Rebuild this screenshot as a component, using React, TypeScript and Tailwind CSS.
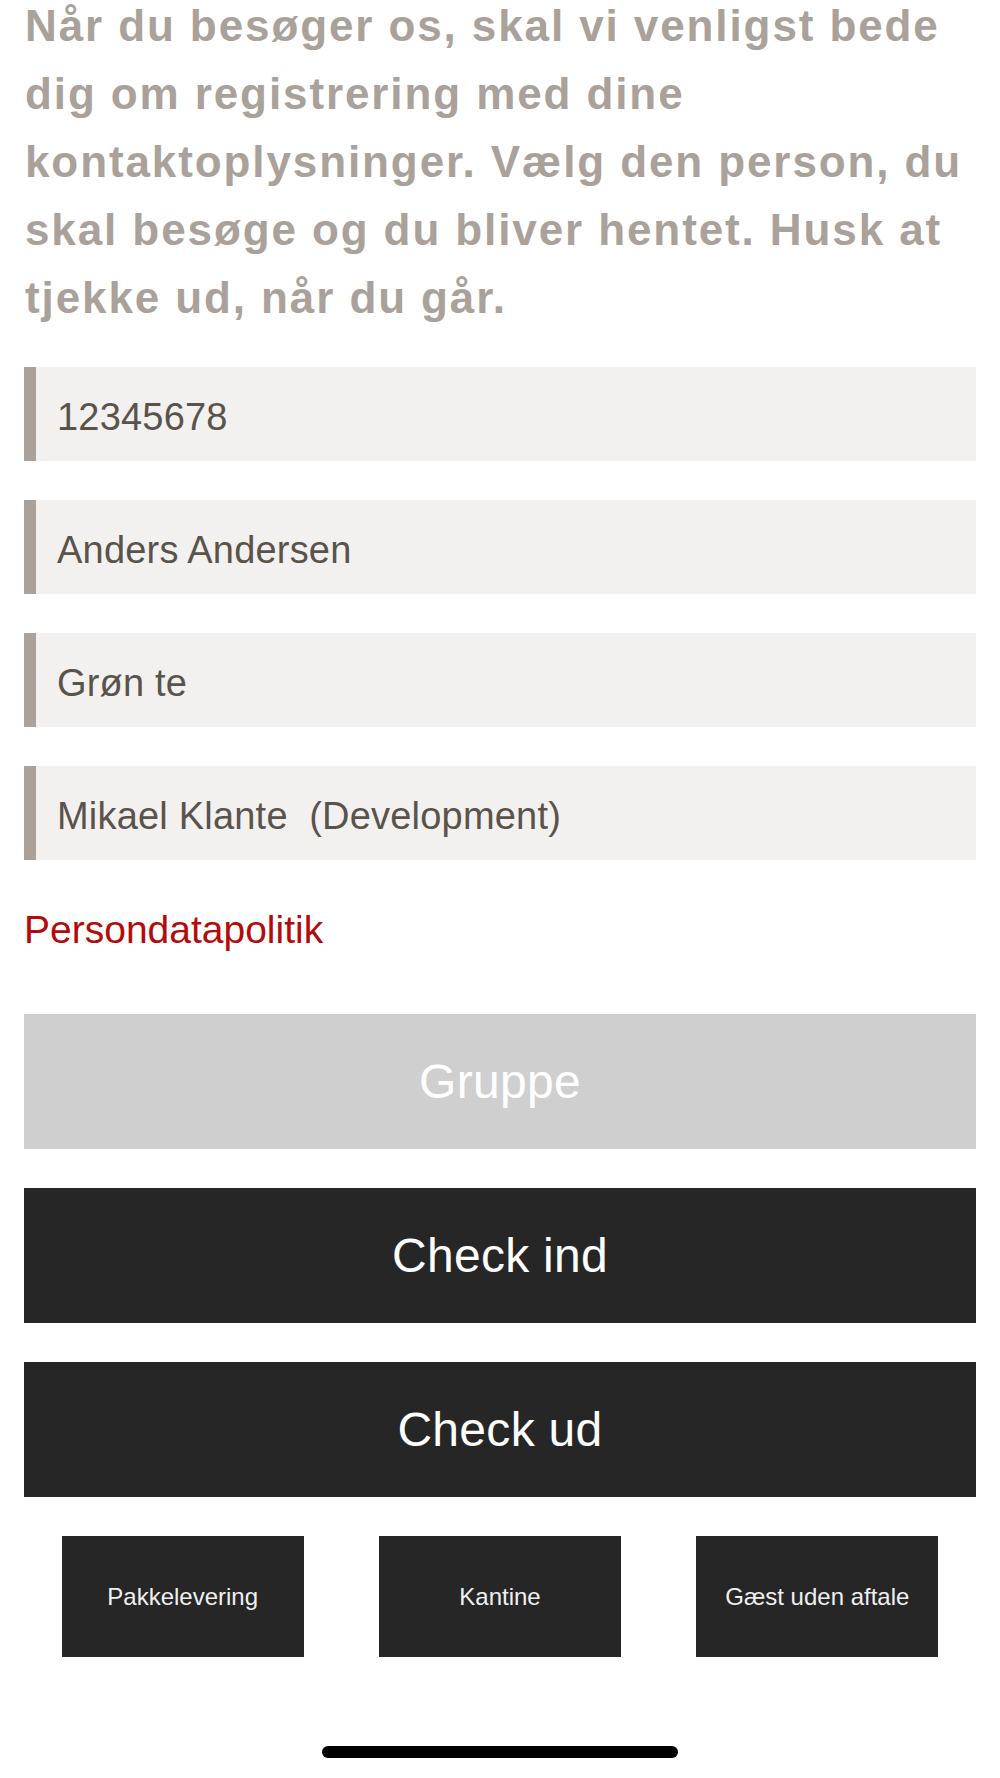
import React from "react";

const fields = ["12345678", "Anders Andersen", "Grøn te", "Mikael Klante  (Development)"];
const shortcuts = ["Pakkelevering", "Kantine", "Gæst uden aftale"];

const FieldRow = ({ value }: { value: string }) => {
    return (
        <div className="flex items-center h-[94px] bg-[#f2f1ef] border-l-[12px] border-[#a9a19a] pl-[21px] pt-[6px]">
            <span className="text-[38px] leading-[44px] tracking-[0.2px] text-[#5a534c] whitespace-pre">{value}</span>
        </div>
    );
};

const BigButton = ({ label, light }: { label: string; light?: boolean }) => {
    return (
        <button
            className={`w-full h-[135px] flex items-center justify-center text-[48px] tracking-[0.3px] text-white ${light ? "bg-[#cfcfcf]" : "bg-[#262626]"}`}
        >
            {label}
        </button>
    );
};

const App = () => {
    return (
        <div className="relative w-full h-[1778px] overflow-hidden bg-white font-['Liberation_Sans',Arial,sans-serif]">
            <div className="px-[24px]">
                <h1 className="mt-[-8px] pl-[1px] text-[44px] leading-[68px] font-bold tracking-[1.9px] text-[#a9a19a]">
                    Når du besøger os, skal vi venligst bede dig om registrering med dine kontaktoplysninger. Vælg den person, du skal besøge og du bliver hentet. Husk at tjekke ud, når du går.
                </h1>

                <div className="mt-[35px] flex flex-col gap-[39px]">
                    {fields.map((f, i) => (
                        <FieldRow key={i} value={f} />
                    ))}
                </div>

                <a className="block mt-[48px] text-[39px] leading-[44px] text-[#b40a0a]">Persondatapolitik</a>

                <div className="mt-[62px] flex flex-col gap-[39px]">
                    <BigButton label="Gruppe" light />
                    <BigButton label="Check ind" />
                    <BigButton label="Check ud" />
                </div>

                <div className="mt-[39px] flex justify-around">
                    {shortcuts.map((s, i) => (
                        <button key={i} className="w-[242px] h-[121px] bg-[#262626] flex items-center justify-center text-[24px] text-[#f0f0f0]">
                            {s}
                        </button>
                    ))}
                </div>
            </div>

            {/* home indicator */}
            <div className="absolute bottom-[20px] left-[322px] w-[356px] h-[12px] rounded-full bg-black" />
        </div>
    );
};

export default App;
